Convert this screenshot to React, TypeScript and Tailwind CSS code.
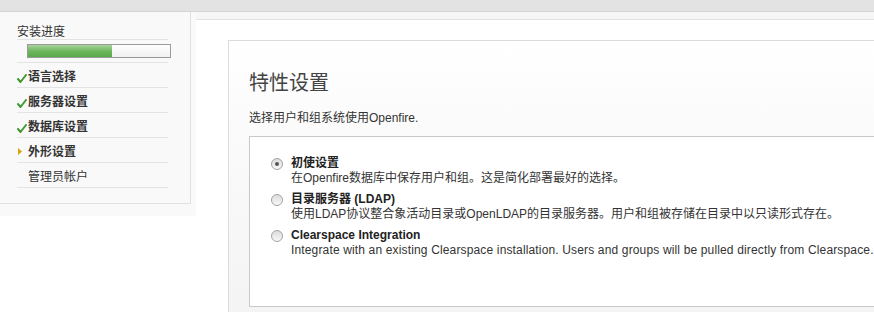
import React from "react";

function Check() {
  return (
    <svg width="10" height="9" viewBox="0 0 10 9" className="shrink-0 mt-[6px]">
      <path d="M1 5 L3.5 8 L9 1" fill="none" stroke="#3f9a34" strokeWidth="2" strokeLinecap="round" strokeLinejoin="round" />
    </svg>
  );
}

function Arrow() {
  return (
    <svg width="10" height="9" viewBox="0 0 10 9" className="shrink-0 mt-[2px]">
      <path d="M1 1 L5 4.5 L1 8 Z" fill="#d9a30f" />
    </svg>
  );
}

function Radio({ checked }: { checked?: boolean }) {
  return (
    <span className="mt-[2px] flex h-[12px] w-[12px] shrink-0 items-center justify-center rounded-full border border-[#a3a3a3] bg-[linear-gradient(to_bottom,#dcdcdc,#f8f8f8)]">
      {checked && <span className="h-[4px] w-[4px] rounded-full bg-[#555]" />}
    </span>
  );
}

export default function App() {
  const items: { label: string; kind: "done" | "current" | "todo" }[] = [
    { label: "语言选择", kind: "done" },
    { label: "服务器设置", kind: "done" },
    { label: "数据库设置", kind: "done" },
    { label: "外形设置", kind: "current" },
    { label: "管理员帐户", kind: "todo" },
  ];
  const options = [
    {
      title: "初使设置",
      desc: "在Openfire数据库中保存用户和组。这是简化部署最好的选择。",
      checked: true,
      latin: false,
    },
    {
      title: "目录服务器 (LDAP)",
      desc: "使用LDAP协议整合象活动目录或OpenLDAP的目录服务器。用户和组被存储在目录中以只读形式存在。",
      latin: false,
    },
    {
      title: "Clearspace Integration",
      desc: "Integrate with an existing Clearspace installation. Users and groups will be pulled directly from Clearspace.",
      latin: true,
    },
  ];
  return (
    <div className="h-[312px] w-[874px] overflow-hidden bg-white text-[12px] text-[#333] font-['Liberation_Sans','Noto_Sans_CJK_SC',sans-serif]">
      <div className="h-[12px] border-b border-[#d3d3d3] bg-[#e3e3e3]" />
      <div className="flex items-start">
        <div className="w-[196px] shrink-0 bg-[#f9f9f9] pb-[12px]">
          <div className="w-[191px] border-r border-b border-[#e0e0e0] pl-[17px] pb-[15px]">
            <div className="w-[151px]">
              <div className="border-b border-[#e3e3e3] pt-[13px] leading-[14px] text-[#333]">安装进度</div>
              <div className="border-b border-[#e3e3e3] py-[4px]">
                <div className="ml-[10px] h-[14px] w-[144px] border border-[#9a9a9a] bg-[linear-gradient(to_bottom,#ffffff,#f0f0f0)]">
                  <div className="h-full w-[84px] bg-[linear-gradient(to_bottom,#a9d39c,#6db75d_50%,#5aa94a)]" />
                </div>
              </div>
              {items.map((it) => (
                <div key={it.label} className="flex h-[25px] items-center border-b border-[#e3e3e3]">
                  <span className="flex w-[11px] shrink-0 items-center">
                    {it.kind === "done" && <Check />}
                    {it.kind === "current" && <Arrow />}
                  </span>
                  <span className={"pt-[3px] " + (it.kind === "todo" ? "text-[#333]" : "font-bold text-[#333]")}>{it.label}</span>
                </div>
              ))}
            </div>
          </div>
        </div>
        <div className="flex-1">
          <div className="h-[8px] border-b border-[#e2e2e2] bg-[#f6f6f6]" />
          <div className="pl-[32px] pt-[20px]">
            <div className="h-[300px] w-[700px] border-l border-t border-[#dcdcdc] bg-[linear-gradient(to_bottom,#ffffff,#fafafa_35%,#f3f3f3)] pl-[20px] pt-[30px]">
              <div className="text-[20px] leading-[24px] text-[#444]">特性设置</div>
              <div className="mt-[15px] leading-[16px] text-[#333]">选择用户和组系统使用Openfire.</div>
              <div className="mt-[10px] h-[171px] border-l border-t border-b border-[#c9c9c9] bg-white pl-[21px] pt-[19px]">
                <div className="flex flex-col gap-[6px]">
                  {options.map((o) => (
                    <div key={o.title} className="flex items-start">
                      <Radio checked={o.checked} />
                      <div className="ml-[8px] whitespace-nowrap">
                        <div className="font-bold leading-[15px] text-[#222]">{o.title}</div>
                        <div className={"leading-[15px] text-[#333] " + (o.latin ? "tracking-[0.15px]" : "")}>{o.desc}</div>
                      </div>
                    </div>
                  ))}
                </div>
              </div>
            </div>
          </div>
        </div>
      </div>
    </div>
  );
}
